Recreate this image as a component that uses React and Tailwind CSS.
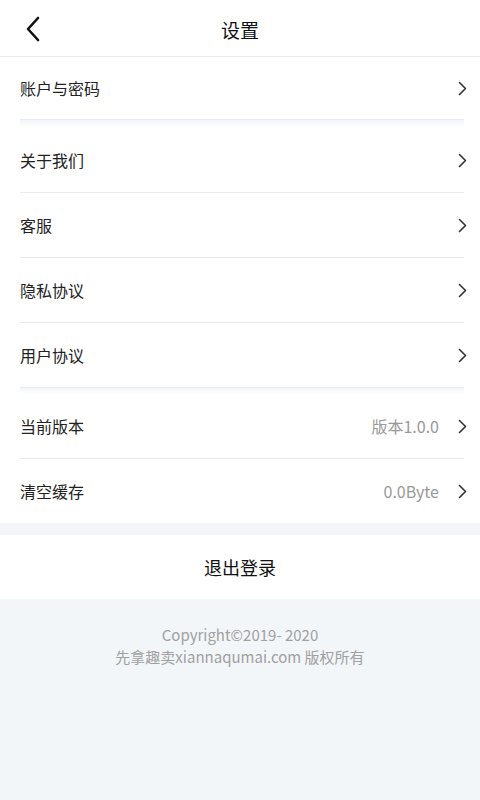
import React from "react";

const Chevron = () => (
  <svg width="9" height="15" viewBox="0 0 9 15" className="shrink-0">
    <path d="M1.5 1.5 L7.5 7.5 L1.5 13.5" fill="none" stroke="#333" strokeWidth="1.6" strokeLinecap="round" strokeLinejoin="round" />
  </svg>
);

const Row = ({ label, value, h = "h-[64px]" }) => (
  <div className={`flex items-center ${h} pl-5 pr-[13px]`}>
    <span className="flex-1 text-[16px] text-[#222]">{label}</span>
    {value && <span className="text-[16px] text-[#999] mr-[19px]">{value}</span>}
    <Chevron />
  </div>
);

const Thin = () => <div className="ml-5 mr-4 h-px bg-[#ececec]" />;
const Thick = ({ g = "h-[8px]" }) => (
  <div className="ml-5 mr-4 flex flex-col">
    <div className="h-px bg-[#e9ecef]" />
    <div className={`${g} bg-gradient-to-b from-[#f1f5f9] to-white`} />
  </div>
);

export default function App() {
  return (
    <div
      className="w-[480px] h-[800px] bg-[#f3f6f9] flex flex-col"
      style={{ fontFamily: '"Noto Sans CJK SC", "Noto Sans", sans-serif' }}
    >
      <div className="relative h-[57px] bg-white border-b border-[#ececec] flex items-center justify-center">
        <svg width="16" height="26" viewBox="0 0 16 26" className="absolute left-[25px] top-[16px]">
          <path d="M13 2 L3 13 L13 24" fill="none" stroke="#111" strokeWidth="2.6" strokeLinecap="round" strokeLinejoin="round" />
        </svg>
        <span className="text-[19px] text-[#111] mt-[4px]">设置</span>
      </div>
      <div className="bg-white flex flex-col">
        <Row label="账户与密码" h="h-[62px]" />
        <Thick g="h-[8px]" />
        <Row label="关于我们" />
        <Thin />
        <Row label="客服" />
        <Thin />
        <Row label="隐私协议" />
        <Thin />
        <Row label="用户协议" />
        <Thick g="h-[6px]" />
        <Row label="当前版本" value="版本1.0.0" />
        <Thin />
        <Row label="清空缓存" value="0.0Byte" />
      </div>
      <div className="mt-[12px] h-[64px] bg-white flex items-center justify-center">
        <span className="text-[18px] text-[#111]">退出登录</span>
      </div>
      <div className="mt-[25px] flex flex-col items-center text-[15px] leading-[22px] text-[#a0a0a0]">
        <span>Copyright©2019- 2020</span>
        <span>先拿趣卖xiannaqumai.com 版权所有</span>
      </div>
    </div>
  );
}
